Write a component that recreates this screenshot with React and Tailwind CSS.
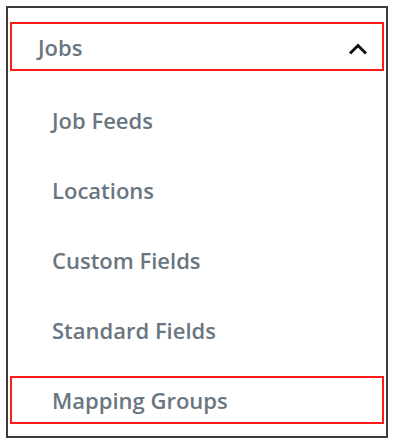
import React from "react";

const items = ["Job Feeds", "Locations", "Custom Fields", "Standard Fields", "Mapping Groups"];

export default function App() {
  return (
    <div className="w-[394px] h-[442px] bg-white pt-[6px] pl-[6px]" style={{ fontFamily: '"Open Sans", sans-serif' }}>
      <div className="w-[382px] h-[432px] border-2 border-[#3c3c3c] px-[2px] pt-[14px]">
        <div className="h-[49px] border-2 border-[#ff1a1a] flex items-center justify-between pl-[26px] pr-[14px]">
          <span className="text-[22px] font-semibold text-[#6a767f] leading-none">Jobs</span>
          <svg width="20" height="12" viewBox="0 0 20 12" fill="none" className="mt-[4px]">
            <path d="M2 10.5 L10 2.5 L18 10.5" stroke="#111" strokeWidth="3" />
          </svg>
        </div>
        <div className="flex flex-col gap-[22px] mt-[25px]">
          {items.map((item, i) => (
            <div
              key={item}
              className={
                "h-[48px] flex items-center pl-[40px] border-2 " +
                (i === items.length - 1 ? "border-[#ff1a1a]" : "border-transparent")
              }
            >
              <span className="text-[22px] font-semibold text-[#6a767f] leading-none">{item}</span>
            </div>
          ))}
        </div>
      </div>
    </div>
  );
}
